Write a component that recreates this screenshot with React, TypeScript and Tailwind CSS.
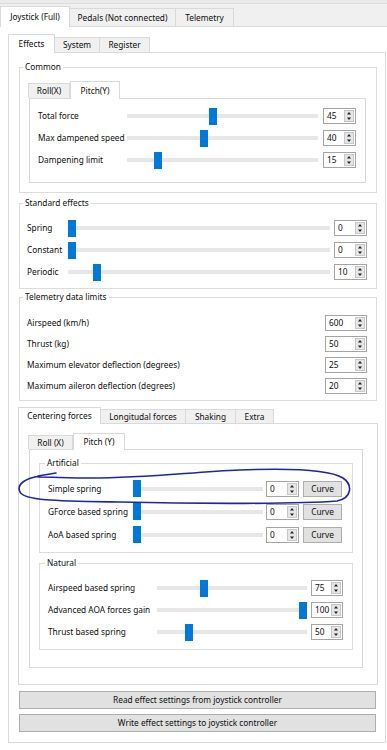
import React from "react";

type TabProps = { label: string; selected?: boolean; w: string; tall: string; short: string };

function Tab({ label, selected, w, tall, short }: TabProps) {
  if (selected) {
    return (
      <div className={`relative z-10 -mb-px flex items-center justify-center border border-b-0 border-[#d9d9d9] bg-white ${w} ${tall}`}>
        {label}
      </div>
    );
  }
  return (
    <div className={`-ml-px flex items-center justify-center border border-b-0 border-[#d9d9d9] bg-[#f0f0f0] ${w} ${short}`}>
      {label}
    </div>
  );
}

function Slider({ v }: { v: number }) {
  return (
    <div className="relative flex h-[17px] flex-1 items-center">
      <div className="h-[4px] w-full bg-[#e7e7e7]" />
      <div
        className="absolute top-0 h-[17px] w-[8px] bg-[#0078d7]"
        style={{ left: `calc(${v} * (100% - 8px))` }}
      />
    </div>
  );
}

function Spin({ value, w }: { value: string; w: string }) {
  return (
    <div className={`flex h-[16px] items-stretch border border-[#a5a5a5] bg-white ${w}`}>
      <div className="flex-1 pl-[3px] leading-[14px]">{value}</div>
      <div className="m-px flex w-[10px] flex-col justify-center gap-[2px] border border-[#c8c8c8] bg-[#e6e6e6]">
        <svg width="8" height="4" viewBox="0 0 8 4" className="mx-auto">
          <path d="M2 3.5 L4 1 L6 3.5 Z" fill="#222" />
        </svg>
        <svg width="8" height="4" viewBox="0 0 8 4" className="mx-auto">
          <path d="M2 0.5 L4 3 L6 0.5 Z" fill="#222" />
        </svg>
      </div>
    </div>
  );
}

function Group({ label, legendMl, className, children }: { label: string; legendMl: string; className: string; children: React.ReactNode }) {
  return (
    <fieldset className={`border border-[#dcdcdc] ${className}`}>
      <legend className={`px-[2px] leading-[12px] ${legendMl}`}>{label}</legend>
      {children}
    </fieldset>
  );
}

export default function App() {
  const common = [
    { label: "Total force", v: 0.45, n: "45" },
    { label: "Max dampened speed", v: 0.4, n: "40" },
    { label: "Dampening limit", v: 0.15, n: "15" },
  ];
  const standard = [
    { label: "Spring", v: 0, n: "0" },
    { label: "Constant", v: 0, n: "0" },
    { label: "Periodic", v: 0.1, n: "10" },
  ];
  const telemetry = [
    { label: "Airspeed (km/h)", n: "600" },
    { label: "Thrust (kg)", n: "50" },
    { label: "Maximum elevator deflection (degrees)", n: "25" },
    { label: "Maximum aileron deflection (degrees)", n: "20" },
  ];
  const artificial = ["Simple spring", "GForce based spring", "AoA based spring"];
  const natural = [
    { label: "Airspeed based spring", v: 0.3, n: "75" },
    { label: "Advanced AOA forces gain", v: 1, n: "100" },
    { label: "Thrust based spring", v: 0.2, n: "50" },
  ];

  return (
    <div className="relative h-[750px] w-[387px] overflow-hidden bg-[#f0f0f0] font-['Noto_Sans','Open_Sans',sans-serif] text-[8.3px] leading-[12px] text-[#0d0d0d]">
      <div className="h-[4px] border-b border-[#dadada] bg-[#ebebeb]" />

      {/* top level tabs */}
      <div className="flex h-[22px] items-end">
        <Tab label="Joystick (Full)" selected w="w-[70px]" tall="h-[21px]" short="h-[18px]" />
        <Tab label="Pedals (Not connected)" w="w-[107px]" tall="h-[21px]" short="h-[18px]" />
        <Tab label="Telemetry" w="w-[59px]" tall="h-[21px]" short="h-[18px]" />
      </div>

      <div className="h-[724px] border-t border-[#d9d9d9] bg-white pl-[8px] pt-[7px]">
        <div className="flex h-[18px] items-end">
          <Tab label="Effects" selected w="w-[47px]" tall="h-[19px]" short="h-[15px]" />
          <Tab label="System" w="w-[46px]" tall="h-[19px]" short="h-[15px]" />
          <Tab label="Register" w="w-[51px]" tall="h-[19px]" short="h-[15px]" />
        </div>

        <div className="h-[691px] w-[378px] border border-[#d9d9d9] bg-white">
          {/* Common */}
          <Group label="Common" legendMl="ml-[3px]" className="ml-[10px] mt-[8px] w-[358px]">
            <div className="pb-[9px] pl-[9px] pr-[10px] pt-[8px]">
              <div className="flex h-[17px] items-end">
                <Tab label="Roll(X)" w="w-[42px]" tall="h-[18px]" short="h-[15px]" />
                <Tab label="Pitch(Y)" selected w="w-[50px]" tall="h-[18px]" short="h-[15px]" />
              </div>
              <div className="border border-[#d9d9d9] pb-[11px] pl-[8px] pr-[9px] pt-[6px]">
                {common.map((r) => (
                  <div key={r.label} className="flex h-[22px] items-center">
                    <div className="w-[89px] whitespace-nowrap">{r.label}</div>
                    <Slider v={r.v} />
                    <div className="w-[5px]" />
                    <Spin value={r.n} w="w-[33px]" />
                  </div>
                ))}
              </div>
            </div>
          </Group>

          {/* Standard effects */}
          <Group label="Standard effects" legendMl="ml-[3px]" className="ml-[10px] mt-[4px] w-[358px]">
            <div className="pb-[5px] pl-[7px] pr-[9px] pt-[8px]">
              {standard.map((r) => (
                <div key={r.label} className="flex h-[22px] items-center">
                  <div className="w-[41px] whitespace-nowrap">{r.label}</div>
                  <Slider v={r.v} />
                  <div className="w-[4px]" />
                  <Spin value={r.n} w="w-[33px]" />
                </div>
              ))}
            </div>
          </Group>

          {/* Telemetry data limits */}
          <Group label="Telemetry data limits" legendMl="ml-[3px]" className="ml-[10px] mt-[2px] w-[358px]">
            <div className="pb-[4px] pl-[7px] pr-[9px] pt-[9px]">
              {telemetry.map((r) => (
                <div key={r.label} className="flex h-[21px] items-center">
                  <div className="flex-1 whitespace-nowrap">{r.label}</div>
                  <Spin value={r.n} w="w-[42px]" />
                </div>
              ))}
            </div>
          </Group>

          {/* Centering forces etc */}
          <div className="ml-[9px] mt-[6px] w-[360px]">
            <div className="flex h-[16px] items-end">
              <Tab label="Centering forces" selected w="w-[83px]" tall="h-[17px]" short="h-[14px]" />
              <Tab label="Longitudal forces" w="w-[86px]" tall="h-[17px]" short="h-[14px]" />
              <Tab label="Shaking" w="w-[51px]" tall="h-[17px]" short="h-[14px]" />
              <Tab label="Extra" w="w-[39px]" tall="h-[17px]" short="h-[14px]" />
            </div>
            <div className="h-[262px] border border-[#d9d9d9] bg-white pl-[10px] pt-[9px]">
              <div className="flex h-[16px] items-end">
                <Tab label="Roll (X)" w="w-[45px]" tall="h-[17px]" short="h-[14px]" />
                <Tab label="Pitch (Y)" selected w="w-[52px]" tall="h-[17px]" short="h-[14px]" />
              </div>
              <div className="w-[334px] border border-[#d9d9d9] pb-[17px] pt-[7px]">
                <Group label="Artificial" legendMl="ml-[5px]" className="ml-[9px] w-[314px]">
                  <div className="pb-[6px] pl-[8px] pr-[10px] pt-[8px]">
                    {artificial.map((l) => (
                      <div key={l} className="flex h-[23px] items-center">
                        <div className="w-[85px] whitespace-nowrap">{l}</div>
                        <Slider v={0} />
                        <div className="w-[3px]" />
                        <Spin value="0" w="w-[33px]" />
                        <div className="w-[4px]" />
                        <button className="h-[16px] w-[39px] border border-[#adadad] bg-[#e1e1e1] leading-[14px]">
                          Curve
                        </button>
                      </div>
                    ))}
                  </div>
                </Group>
                <Group label="Natural" legendMl="ml-[5px]" className="ml-[9px] mt-[4px] w-[314px]">
                  <div className="pb-[6px] pl-[8px] pr-[9px] pt-[8px]">
                    {natural.map((r) => (
                      <div key={r.label} className="flex h-[22px] items-center">
                        <div className="w-[109px] whitespace-nowrap">{r.label}</div>
                        <Slider v={r.v} />
                        <div className="w-[4px]" />
                        <Spin value={r.n} w="w-[32px]" />
                      </div>
                    ))}
                  </div>
                </Group>
              </div>
            </div>
          </div>

          <button className="ml-[10px] mt-[6px] block h-[18px] w-[357px] border border-[#adadad] bg-[#e1e1e1] leading-[16px]">
            Read effect settings from joystick controller
          </button>
          <button className="ml-[10px] mt-[5px] block h-[18px] w-[357px] border border-[#adadad] bg-[#e1e1e1] leading-[16px]">
            Write effect settings to joystick controller
          </button>
        </div>
      </div>

      {/* hand drawn annotation */}
      <svg className="pointer-events-none absolute left-0 top-0" width="387" height="750" viewBox="0 0 387 750">
        <path
          d="M40 476 C26 478 16 484 20 492 C24 501 60 501 120 502 C200 504 300 504 337 501 C352 498 353 485 343 478 C330 470 290 468 240 470 C190 472 150 478 90 478 C70 478 52 477 38 477 M38 476 L56 473"
          fill="none"
          stroke="#1f24a8"
          strokeWidth="1.6"
          strokeLinecap="round"
        />
      </svg>
    </div>
  );
}
